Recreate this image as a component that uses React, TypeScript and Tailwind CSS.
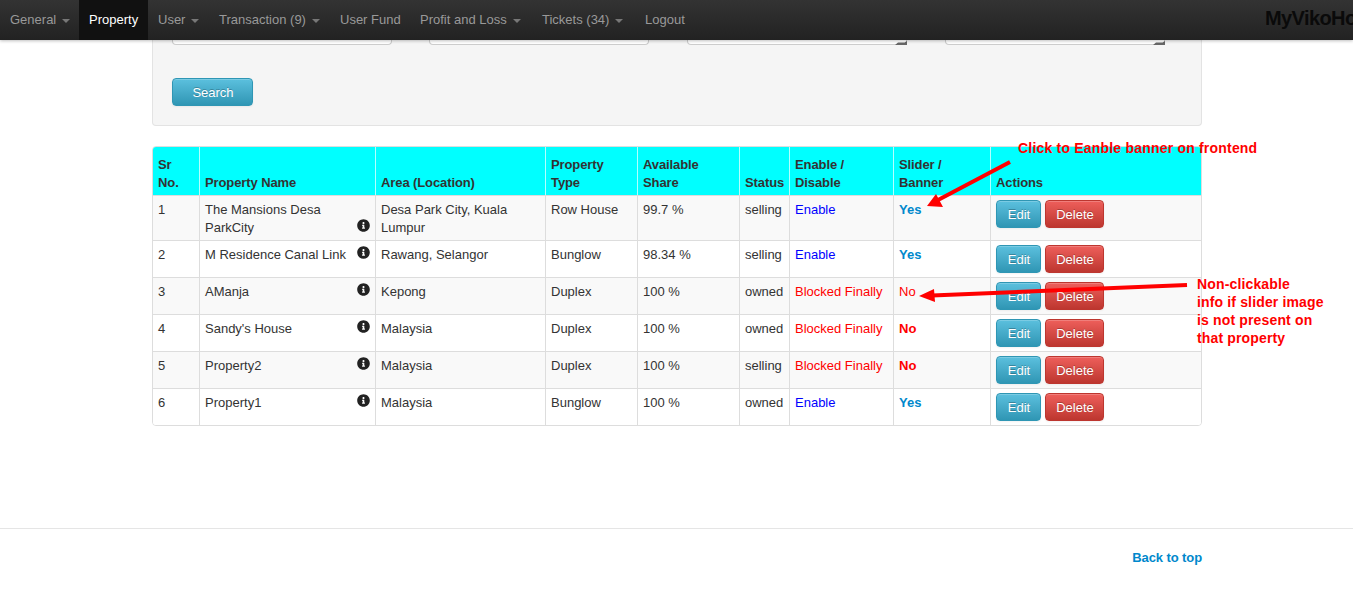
import { FaInfoCircle } from 'react-icons/fa';

interface PropertyRow {
  id: number;
  name: string;
  area: string;
  type: string;
  share: string;
  status: string;
  enabled: boolean;
  slider: 'Yes' | 'No' | 'NoPlain';
}

const navItems = [
  { label: 'General', caret: true, width: 'w-[79px]' },
  { label: 'Property', active: true, width: 'w-[69px]' },
  { label: 'User', caret: true, width: 'w-[61px]' },
  { label: 'Transaction (9)', caret: true, width: 'w-[121px]' },
  { label: 'User Fund', width: 'w-[80px]' },
  { label: 'Profit and Loss', caret: true, width: 'w-[122px]' },
  { label: 'Tickets (34)', caret: true, width: 'w-[103px]' },
  { label: 'Logout', width: 'w-[60px]' },
];

const rows: PropertyRow[] = [
  { id: 1, name: 'The Mansions Desa ParkCity', area: 'Desa Park City, Kuala Lumpur', type: 'Row House', share: '99.7 %', status: 'selling', enabled: true, slider: 'Yes' },
  { id: 2, name: 'M Residence Canal Link', area: 'Rawang, Selangor', type: 'Bunglow', share: '98.34 %', status: 'selling', enabled: true, slider: 'Yes' },
  { id: 3, name: 'AManja', area: 'Kepong', type: 'Duplex', share: '100 %', status: 'owned', enabled: false, slider: 'NoPlain' },
  { id: 4, name: "Sandy's House", area: 'Malaysia', type: 'Duplex', share: '100 %', status: 'owned', enabled: false, slider: 'No' },
  { id: 5, name: 'Property2', area: 'Malaysia', type: 'Duplex', share: '100 %', status: 'selling', enabled: false, slider: 'No' },
  { id: 6, name: 'Property1', area: 'Malaysia', type: 'Bunglow', share: '100 %', status: 'owned', enabled: true, slider: 'Yes' },
];

const thClass = 'border-l border-white/70 first:border-l-0 pt-[9px] pb-[3px] px-[5px] text-left align-bottom font-bold tracking-[-0.1px]';
const tdClass = 'border-l border-t border-[#ddd] first:border-l-0 pt-[5px] pb-[3px] px-[5px] align-top';
const cellBtnClass = 'border-l border-t border-[#ddd] first:border-l-0 py-1 px-[5px] align-top';
const infoBtn = 'h-7 rounded-[4px] border border-[#2f96b4] bg-gradient-to-b from-[#5bc0de] to-[#2f96b4] pt-px pl-px text-white [text-shadow:0_-1px_0_rgba(0,0,0,0.25)] shadow-[inset_0_1px_0_rgba(255,255,255,0.2),0_1px_2px_rgba(0,0,0,0.05)]';
const dangerBtn = 'h-7 rounded-[4px] border border-[#bd362f] bg-gradient-to-b from-[#ee5f5b] to-[#bd362f] pt-px pl-px text-white [text-shadow:0_-1px_0_rgba(0,0,0,0.25)] shadow-[inset_0_1px_0_rgba(255,255,255,0.2),0_1px_2px_rgba(0,0,0,0.05)]';

function FilterStub({ resizable }: { resizable?: boolean }) {
  return (
    <div className="relative h-[5px] w-[220px] rounded-b-[4px] border-x border-b border-[#ccc] bg-white">
      {resizable && <span className="absolute -right-px -bottom-px h-[4px] w-[12px] bg-[#666] [clip-path:polygon(100%_0,100%_100%,0_100%,25%_40%,80%_40%)]" />}
    </div>
  );
}

export default function App() {
  return (
    <div className="relative h-[596px] overflow-hidden bg-white font-['Liberation_Sans',Arial,sans-serif] text-[13px] leading-[18px] text-[#333]">
      <div className="relative z-10 flex h-10 overflow-hidden whitespace-nowrap bg-gradient-to-b from-[#333] to-[#222] shadow-[0_1px_3px_rgba(0,0,0,0.25)]">
        {navItems.map((item) => (
          <div
            key={item.label}
            className={`flex shrink-0 items-center pl-2.5 ${item.width} ${item.active ? 'bg-[#111] text-white' : 'text-[#999]'}`}
          >
            {item.label}
            {item.caret && (
              <span className="ml-[6px] mt-px h-0 w-0 border-x-[4px] border-t-[4px] border-x-transparent border-t-[#777]" />
            )}
          </div>
        ))}
        <div className="ml-[570px] flex items-center pb-1 text-[20px] font-bold tracking-[-0.6px] text-[#0a0a0a]">MyVikoHome</div>
      </div>

      <div className="ml-[152px] h-[86px] w-[1050px] rounded-b-[4px] border-x border-b border-[#e3e3e3] bg-[#f5f5f5] pl-[19px]">
        <div className="grid grid-cols-[257px_258px_258px_220px]">
          <FilterStub />
          <FilterStub />
          <FilterStub resizable />
          <FilterStub resizable />
        </div>
        <button className={`${infoBtn} mt-[33px] w-[81px]`}>Search</button>
      </div>

      <div className="mt-5 ml-[152px] w-[1050px] overflow-hidden rounded-[4px] border border-[#ddd]">
        <table className="w-full table-fixed border-separate border-spacing-0">
          <colgroup>
            <col className="w-[46px]" />
            <col className="w-[176px]" />
            <col className="w-[170px]" />
            <col className="w-[92px]" />
            <col className="w-[102px]" />
            <col className="w-[50px]" />
            <col className="w-[104px]" />
            <col className="w-[97px]" />
            <col className="w-[211px]" />
          </colgroup>
          <thead className="bg-[#00ffff]">
            <tr>
              <th className={thClass}>Sr No.</th>
              <th className={thClass}>Property Name</th>
              <th className={thClass}>Area (Location)</th>
              <th className={thClass}>Property Type</th>
              <th className={thClass}>Available Share</th>
              <th className={thClass}>Status</th>
              <th className={thClass}>Enable / Disable</th>
              <th className={thClass}>Slider / Banner</th>
              <th className={thClass}>Actions</th>
            </tr>
          </thead>
          <tbody>
            {rows.map((row) => (
              <tr key={row.id} className={row.id % 2 === 1 ? 'bg-[#f9f9f9]' : 'bg-white'}>
                <td className={tdClass}>{row.id}</td>
                <td className={tdClass}>
                  <div className="flex items-end gap-2">
                    <span className="min-w-0 flex-1">{row.name}</span>
                    <FaInfoCircle className="mb-[5px] h-[13px] w-[13px] shrink-0 text-[#222]" />
                  </div>
                </td>
                <td className={tdClass}>{row.area}</td>
                <td className={tdClass}>{row.type}</td>
                <td className={tdClass}>{row.share}</td>
                <td className={tdClass}>{row.status}</td>
                <td className={tdClass}>
                  {row.enabled ? (
                    <span className="text-[#0000ff]">Enable</span>
                  ) : (
                    <span className="text-[#ff0000]">Blocked Finally</span>
                  )}
                </td>
                <td className={tdClass}>
                  {row.slider === 'Yes' && <span className="font-bold text-[#0088cc]">Yes</span>}
                  {row.slider === 'No' && <span className="font-bold text-[#ff0000]">No</span>}
                  {row.slider === 'NoPlain' && <span className="text-[#ff0000]">No</span>}
                </td>
                <td className={cellBtnClass}>
                  <div className="flex gap-1">
                    <button className={`${infoBtn} w-[45px]`}>Edit</button>
                    <button className={`${dangerBtn} w-[59px]`}>Delete</button>
                  </div>
                </td>
              </tr>
            ))}
          </tbody>
        </table>
      </div>

      <div className="mt-[102px] border-t border-[#e5e5e5] pt-5 pr-[151px] text-right">
        <span className="font-bold tracking-[-0.1px] text-[#0088cc]">Back to top</span>
      </div>

      {/* annotations drawn over the screenshot */}
      <svg className="pointer-events-none absolute top-0 left-0 z-20" width="1353" height="596">
        <line x1="1010" y1="162" x2="938" y2="200" stroke="#ff0000" strokeWidth="4" />
        <polygon points="927,206 936,194 943,207" fill="#ff0000" />
        <line x1="1187" y1="285" x2="932" y2="295.5" stroke="#ff0000" strokeWidth="4" />
        <polygon points="919,296 934,289 935,302" fill="#ff0000" />
      </svg>
      <div className="absolute top-[139px] left-[1018px] z-20 whitespace-nowrap text-[14px] font-bold tracking-[0.2px] text-[#ff0000]">
        Click to Eanble banner on frontend
      </div>
      <div className="absolute top-[275px] left-[1197px] z-20 w-[140px] text-[14px] font-bold tracking-[0.15px] text-[#ff0000]">
        Non-clickable
        <br />
        info if slider image
        <br />
        is not present on
        <br />
        that property
      </div>
    </div>
  );
}
